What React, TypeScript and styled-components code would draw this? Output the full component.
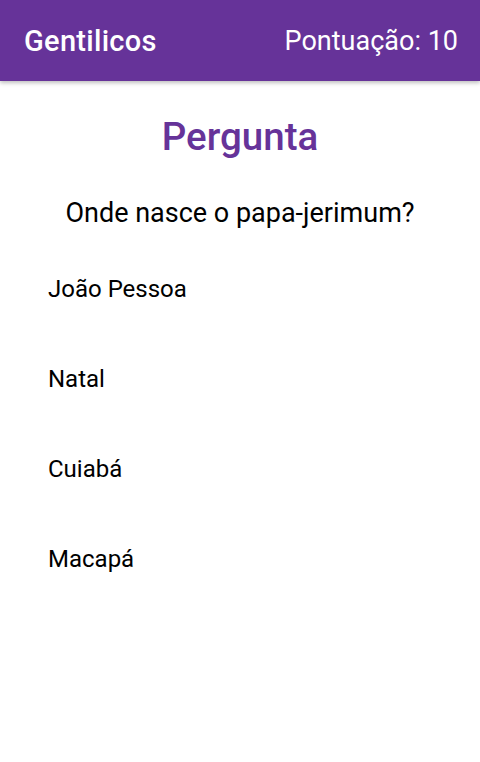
import React from "react";
import styled, { createGlobalStyle } from "styled-components";

const Global = createGlobalStyle`
  html, body { margin: 0; padding: 0; background: #fff; }
  body { font-family: Roboto, "Noto Sans", sans-serif; }
`;

const Page = styled.div`
  width: 480px;
  min-height: 762px;
  display: flex;
  flex-direction: column;
  background: #fff;
`;

const AppBar = styled.header`
  height: 81px;
  background: #663399;
  display: flex;
  align-items: center;
  justify-content: space-between;
  padding: 0 22px 0 24px;
  box-shadow: 0 2px 4px rgba(0, 0, 0, 0.25);
  color: #fff;
  box-sizing: border-box;
`;

const Title = styled.h1`
  margin: 0;
  font-size: 29px;
  font-weight: 500;
  letter-spacing: 0.3px;
`;

const Score = styled.span`
  font-size: 27px;
  font-weight: 400;
`;

const Body = styled.main`
  display: flex;
  flex-direction: column;
  padding-top: 34px;
`;

const Heading = styled.h2`
  margin: 0;
  text-align: center;
  color: #663399;
  font-size: 38.5px;
  font-weight: 500;
  line-height: 44px;
`;

const Question = styled.p`
  margin: 38px 0 0;
  text-align: center;
  font-size: 27px;
  line-height: 32px;
  color: #000;
`;

const Options = styled.ul`
  list-style: none;
  margin: 15px 0 0;
  padding: 0;
  display: flex;
  flex-direction: column;
`;

const Option = styled.li`
  height: 90px;
  display: flex;
  align-items: center;
  padding-left: 48px;
  font-size: 24px;
  color: #000;
`;

const answers = ["João Pessoa", "Natal", "Cuiabá", "Macapá"];

export default function App() {
  return (
    <Page>
      <Global />
      <AppBar>
        <Title>Gentilicos</Title>
        <Score>Pontuação: 10</Score>
      </AppBar>
      <Body>
        <Heading>Pergunta</Heading>
        <Question>Onde nasce o papa-jerimum?</Question>
        <Options>
          {answers.map((a) => (
            <Option key={a}>{a}</Option>
          ))}
        </Options>
      </Body>
    </Page>
  );
}
